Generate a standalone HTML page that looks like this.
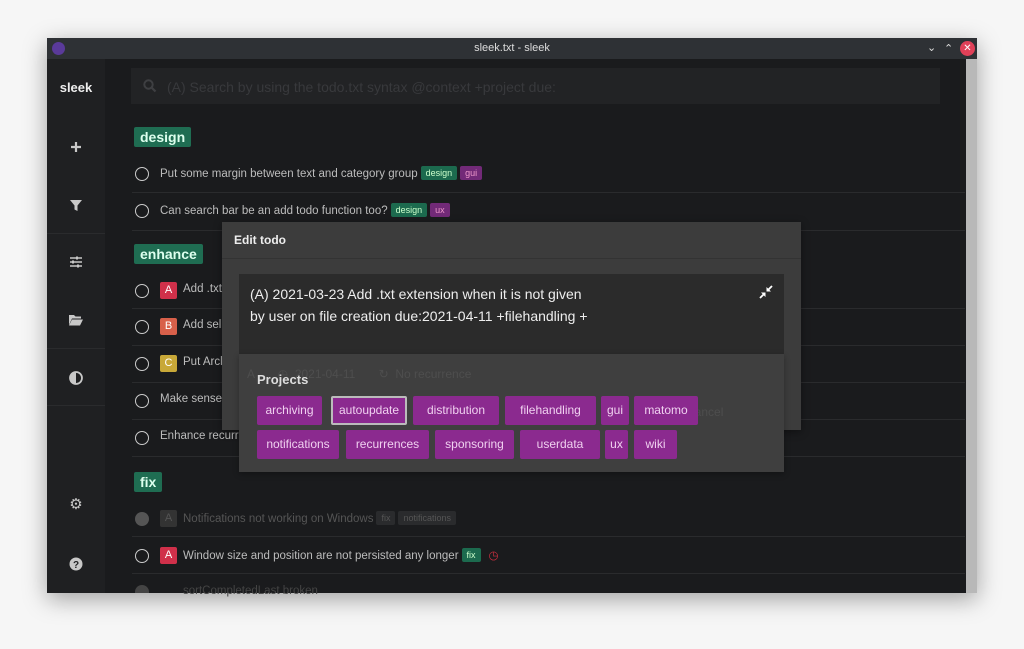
<!DOCTYPE html>
<html><head><meta charset="utf-8"><style>
*{margin:0;padding:0;box-sizing:border-box}
body{width:1024px;height:649px;background:#f6f6f6;font-family:"Liberation Sans",sans-serif;position:relative;overflow:hidden}
.a{position:absolute}
.win{left:47px;top:38px;width:930px;height:555px;background:#1a1b1d;box-shadow:0 6px 22px rgba(0,0,0,.35)}
.tb{left:0;top:0;width:930px;height:21px;background:#2e3135;color:#ddd;font-size:11px;text-align:center;line-height:21px}
.side{left:0;top:21px;width:58px;height:534px;background:#1f2022}
.ic{left:21px}
.row{left:85px;width:833px;height:1px;background:#2a2b2d}
.t{color:#bcbcbc;font-size:11.5px;white-space:nowrap}
.circ{width:14px;height:14px;border:1.6px solid #ccc;border-radius:50%}
.hd{background:#1f6d52;color:#dfe;font-weight:bold;font-size:14px;padding:2px 6px;border-radius:2px;line-height:16px}
.pr{width:17px;height:17px;color:#fff;font-size:11px;text-align:center;line-height:17px;border-radius:2px}
.tg{display:inline-block;font-size:9px;padding:2px 5px;margin-left:3px;border-radius:2px;color:#cfc;vertical-align:1px}
.g{background:#1c6a4e}.p{background:#722a78;color:#e9c}
.pt{background:#8b2a8f;color:#f0d0f0;font-size:12px;height:29px;line-height:29px;text-align:center;border-radius:2px}
</style></head><body>
<div class="a win">
 <div class="a tb">sleek.txt - sleek</div>
 <div class="a" style="left:5px;top:4px;width:13px;height:13px;border-radius:50%;background:#5a3a9a"></div>
 <div class="a" style="left:880px;top:3px;color:#ddd;font-size:11px">&#8964;</div>
 <div class="a" style="left:897px;top:4px;color:#ddd;font-size:11px">&#8963;</div>
 <div class="a" style="left:913px;top:3px;width:15px;height:15px;border-radius:50%;background:#e04058;color:#fff;font-size:10px;text-align:center;line-height:15px">✕</div>
 <div class="a side">
  <div class="a" style="top:21px;width:58px;text-align:center;color:#eee;font-weight:bold;font-size:13px">sleek</div>
  <svg class="a ic" style="top:80px" width="16" height="16" viewBox="0 0 16 16"><path d="M8 3v10M3 8h10" stroke="#c8c8c8" stroke-width="2.2"/></svg>
  <svg class="a ic" style="top:138px" width="16" height="16" viewBox="0 0 16 16"><path d="M2 3h12l-4.5 5.5V14l-3-1.5V8.5z" fill="#c8c8c8"/></svg>
  <div class="a" style="top:174px;left:0;width:58px;height:1px;background:#2a2b2d"></div>
  <svg class="a ic" style="top:195px" width="16" height="16" viewBox="0 0 16 16"><path d="M2 4h12M2 8h12M2 12h12" stroke="#c8c8c8" stroke-width="1.5"/><path d="M9 2.5v3M5 6.5v3M10 10.5v3" stroke="#c8c8c8" stroke-width="2"/></svg>
  <svg class="a ic" style="top:253px" width="16" height="16" viewBox="0 0 16 16"><path d="M1 3h5l1.5 1.5H13v2H4L1 13z" fill="#c8c8c8"/><path d="M4 7.5h11l-3 6H1z" fill="#c8c8c8"/></svg>
  <div class="a" style="top:289px;left:0;width:58px;height:1px;background:#2a2b2d"></div>
  <svg class="a ic" style="top:311px" width="16" height="16" viewBox="0 0 16 16"><circle cx="8" cy="8" r="6" fill="none" stroke="#c8c8c8" stroke-width="1.8"/><path d="M8 2a6 6 0 0 0 0 12z" fill="#c8c8c8"/></svg>
  <div class="a" style="top:346px;left:0;width:58px;height:1px;background:#2a2b2d"></div>
  <div class="a" style="left:0;top:436px;width:58px;text-align:center;color:#c8c8c8;font-size:15px">⚙</div>
  <svg class="a ic" style="top:497px" width="16" height="16" viewBox="0 0 16 16"><circle cx="8" cy="8" r="6.5" fill="#c8c8c8"/><text x="8" y="12" font-size="10" font-weight="bold" text-anchor="middle" fill="#1f2022" font-family="Liberation Sans">?</text></svg>
 </div>
 <div class="a" style="left:84px;top:30px;width:809px;height:36px;background:#222325"></div>
 <svg class="a" style="left:96px;top:41px" width="14" height="14" viewBox="0 0 14 14"><circle cx="5.5" cy="5.5" r="4.2" fill="none" stroke="#3e3f42" stroke-width="2"/><path d="M8.5 8.5l4 4" stroke="#3e3f42" stroke-width="2.2"/></svg>
 <div class="a" style="left:120px;top:41px;color:#38393c;font-size:14px">(A) Search by using the todo.txt syntax @context +project due:</div>
 <div class="a" style="left:919px;top:21px;width:11px;height:534px;background:#b8b8b8"></div>
 <div class="a hd" style="left:87px;top:89px">design</div>
 <div class="a circ" style="left:88px;top:129px"></div><div class="a t" style="left:113px;top:128px">Put some margin between text and category group<span class="tg g">design</span><span class="tg p">gui</span></div>
 <div class="a row" style="top:154px"></div>
 <div class="a circ" style="left:88px;top:166px"></div><div class="a t" style="left:113px;top:165px">Can search bar be an add todo function too?<span class="tg g">design</span><span class="tg p">ux</span></div>
 <div class="a row" style="top:192px"></div>
 <div class="a hd" style="left:87px;top:206px">enhance</div>
 <div class="a circ" style="left:88px;top:246px"></div><div class="a pr" style="left:113px;top:244px;background:#d0304a">A</div><div class="a t" style="left:136px;top:245px">Add .txt</div>
 <div class="a row" style="top:270px"></div>
 <div class="a circ" style="left:88px;top:282px"></div><div class="a pr" style="left:113px;top:280px;background:#d8604a">B</div><div class="a t" style="left:136px;top:281px">Add sel</div>
 <div class="a row" style="top:307px"></div>
 <div class="a circ" style="left:88px;top:319px"></div><div class="a pr" style="left:113px;top:317px;background:#c8a838">C</div><div class="a t" style="left:136px;top:318px">Put Arcl</div>
 <div class="a row" style="top:344px"></div>
 <div class="a circ" style="left:88px;top:356px"></div><div class="a t" style="left:113px;top:355px">Make sense</div>
 <div class="a row" style="top:381px"></div>
 <div class="a circ" style="left:88px;top:393px"></div><div class="a t" style="left:113px;top:392px">Enhance recurre</div>
 <div class="a row" style="top:418px"></div>
 <div class="a hd" style="left:87px;top:434px">fix</div>
 <div class="a" style="left:88px;top:474px;width:14px;height:14px;border-radius:50%;background:#555"></div><div class="a pr" style="left:113px;top:472px;background:#333;color:#555">A</div><div class="a t" style="left:136px;top:473px;color:#555">Notifications not working on Windows<span class="tg" style="background:#2a2b2d;color:#555">fix</span><span class="tg" style="background:#2a2b2d;color:#555">notifications</span></div>
 <div class="a row" style="top:498px"></div>
 <div class="a circ" style="left:88px;top:511px"></div><div class="a pr" style="left:113px;top:509px;background:#d0304a">A</div><div class="a t" style="left:136px;top:510px">Window size and position are not persisted any longer<span class="tg g">fix</span><span style="color:#d03040;margin-left:8px">◷</span></div>
 <div class="a row" style="top:535px"></div>
 <div class="a" style="left:88px;top:547px;width:14px;height:8px;border-radius:7px 7px 0 0;background:#444"></div>
 <div class="a t" style="left:136px;top:547px;color:#444">sortCompletedLast broken</div>
</div>
<div class="a" style="left:222px;top:222px;width:579px;height:208px;background:#3c3c3c;box-shadow:0 2px 8px rgba(0,0,0,.4)"></div>
<div class="a" style="left:234px;top:233px;color:#eee;font-size:12px;font-weight:bold">Edit todo</div>
<div class="a" style="left:222px;top:258px;width:579px;height:1px;background:#333"></div>
<div class="a" style="left:239px;top:274px;width:545px;height:80px;background:#2b2b2b"></div>
<div class="a" style="left:250px;top:284px;color:#eee;font-size:14px;line-height:21.5px">(A) 2021-03-23 Add .txt extension when it is not given<br>by user on file creation due:2021-04-11 +filehandling +</div>
<svg class="a" style="left:759px;top:285px" width="14" height="14" viewBox="0 0 14 14"><path d="M1 13l4.5-4.5M13 1L8.5 5.5" stroke="#fff" stroke-width="1.8"/><path d="M2 7.5h4.5V12zM12 6.5H7.5V2z" fill="#fff"/></svg>
<div class="a" style="left:239px;top:354px;width:545px;height:118px;background:#3f3f3f;box-shadow:0 2px 6px rgba(0,0,0,.3)"></div>
<div class="a" style="left:247px;top:367px;color:#4e4e4e;font-size:12px">A &nbsp; &nbsp; &nbsp; ◷ &nbsp;2021-04-11 &nbsp; &nbsp; &nbsp; ↻ &nbsp;No recurrence</div>
<div class="a" style="left:257px;top:372px;color:#ddd;font-size:13px;font-weight:bold">Projects</div>
<div class="a" style="left:686px;top:405px;color:#4e4e4e;font-size:12px">Cancel</div>
<div class="a pt" style="left:257px;top:396px;width:65px">archiving</div>
<div class="a pt" style="left:331px;top:396px;width:76px;border:2px solid #bbb;line-height:25px">autoupdate</div>
<div class="a pt" style="left:413px;top:396px;width:86px">distribution</div>
<div class="a pt" style="left:505px;top:396px;width:91px">filehandling</div>
<div class="a pt" style="left:601px;top:396px;width:28px">gui</div>
<div class="a pt" style="left:634px;top:396px;width:64px">matomo</div>
<div class="a pt" style="left:257px;top:430px;width:82px">notifications</div>
<div class="a pt" style="left:346px;top:430px;width:83px">recurrences</div>
<div class="a pt" style="left:435px;top:430px;width:79px">sponsoring</div>
<div class="a pt" style="left:520px;top:430px;width:80px">userdata</div>
<div class="a pt" style="left:605px;top:430px;width:23px">ux</div>
<div class="a pt" style="left:634px;top:430px;width:43px">wiki</div>
</body></html>
